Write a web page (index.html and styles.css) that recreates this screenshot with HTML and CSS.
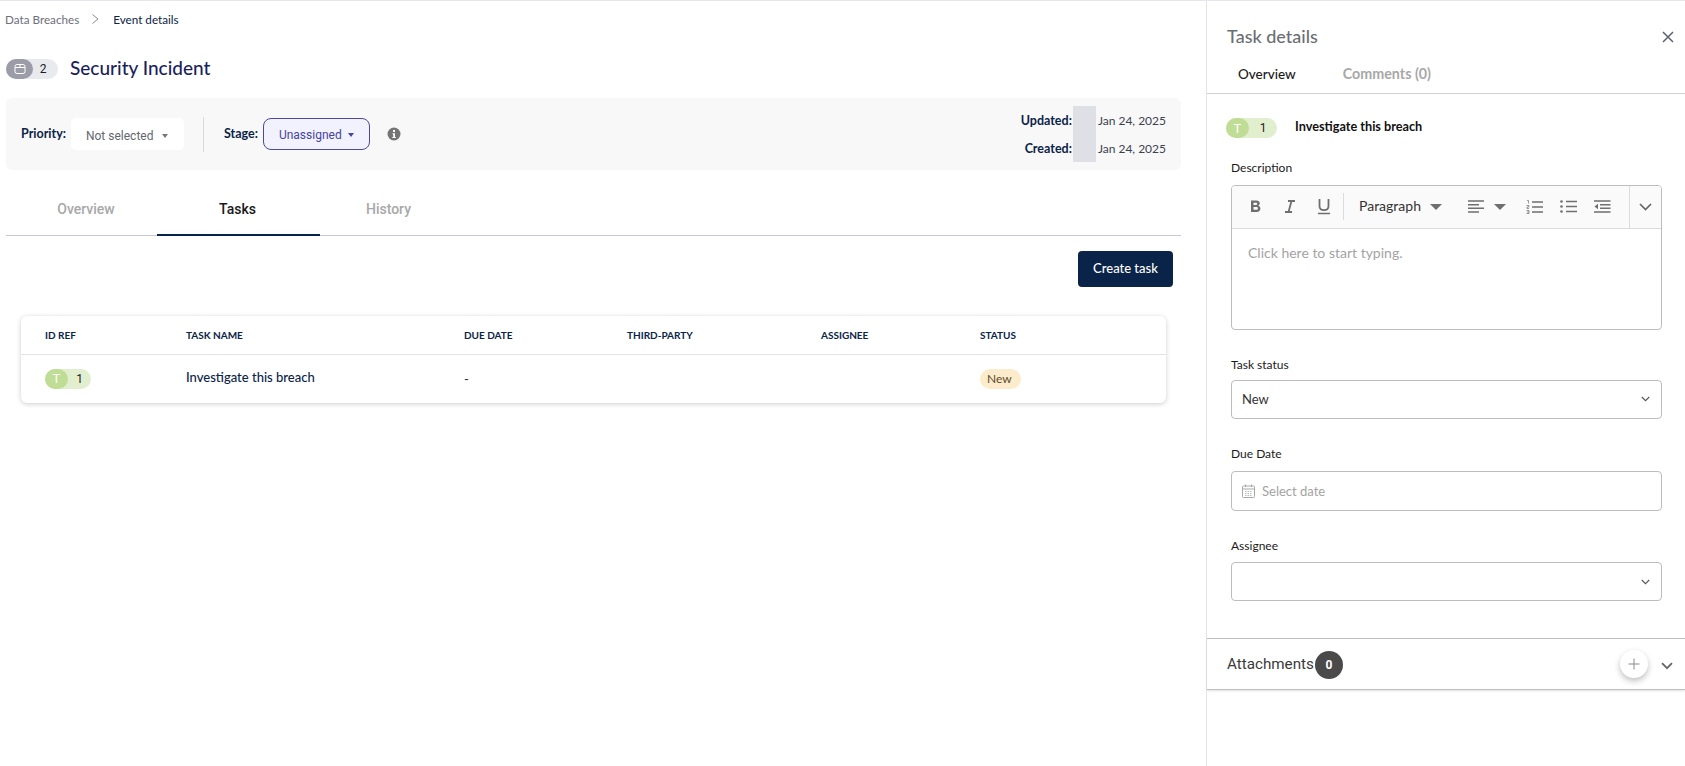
FILE: index.html
```html
<!DOCTYPE html>
<html lang="en">
<head>
<meta charset="utf-8">
<title>Event details</title>
<link rel="stylesheet" href="styles.css">
</head>
<body>
<div class="app">
  <main class="main">
    <nav class="crumbs"><span class="crumb-link">Data Breaches</span>
      <svg class="crumb-sep" width="9" height="12" viewBox="0 0 9 12"><path d="M1.5 1.5 7 6l-5.500 4.500" fill="none" stroke="#8b8b95" stroke-width="1"/></svg>
      <span class="crumb-cur">Event details</span></nav>
    <header class="title-row">
      <span class="chip chip-gray"><span class="chip-lead lead-gray">
        <svg width="12" height="12" viewBox="0 0 12 12"><rect x="1" y="1.500" width="10" height="9" rx="2" fill="none" stroke="#fff" stroke-width="1"/><path d="M1 4.500h10M6 1.500v3" stroke="#fff" stroke-width="1"/></svg>
      </span><span class="chip-num">2</span></span>
      <h1 class="title">Security Incident</h1>
    </header>
    <section class="bar">
      <div class="field-label lbl-priority">Priority:</div>
      <div class="priority">Not selected<span class="caret caret-gray"></span></div>
      <div class="bar-div"></div>
      <div class="field-label">Stage:</div>
      <div class="stage">Unassigned<span class="caret caret-purple"></span></div>
      <svg class="info" width="14" height="14" viewBox="0 0 14 14"><circle cx="7" cy="7" r="6.500" fill="#757575"/><rect x="6" y="3" width="2" height="2" fill="#fff"/><path d="M5.500 6.200h2.500v3.700h.8v1H5.300v-1h.9V7.200h-.7z" fill="#fff"/></svg>
      <div class="dates">
        <span class="date-l">Updated:</span><span class="patch"></span><span class="date-v">Jan 24, 2025</span>
        <span class="date-l">Created:</span><span class="date-v">Jan 24, 2025</span>
      </div>
    </section>
    <div class="tabs">
      <div class="tab">Overview</div>
      <div class="tab tab-on">Tasks</div>
      <div class="tab">History</div>
    </div>
    <div class="actions"><button class="btn">Create task</button></div>
    <section class="card">
      <div class="row row-head">
        <div>ID REF</div><div>TASK NAME</div><div>DUE DATE</div><div>THIRD-PARTY</div><div>ASSIGNEE</div><div>STATUS</div>
      </div>
      <div class="row row-body">
        <div><span class="chip chip-green"><span class="chip-lead lead-green">T</span><span class="chip-num">1</span></span></div>
        <div class="task-name">Investigate this breach</div>
        <div class="cell">-</div><div></div><div></div>
        <div><span class="status">New</span></div>
      </div>
    </section>
  </main>
  <aside class="panel">
    <div class="panel-head">
      <h2 class="panel-title">Task details</h2>
      <svg class="close" width="12" height="12" viewBox="0 0 12 12"><path d="M1 1l10 10M11 1 1 11" stroke="#5c5f73" stroke-width="1.500"/></svg>
    </div>
    <div class="panel-tabs"><span class="ptab ptab-on">Overview</span><span class="ptab">Comments (0)</span></div>
    <div class="panel-sub">
      <span class="chip chip-green chip-wide"><span class="chip-lead lead-green">T</span><span class="chip-num">1</span></span>
      <span class="sub-title">Investigate this breach</span>
    </div>
    <div class="form">
      <label class="lbl lbl-desc">Description</label>
      <div class="editor">
        <div class="toolbar">
          <svg class="ti ti-b" width="14" height="15" viewBox="0 0 14 15"><path d="M2 1.500h5.500c2 0 3.300 1.100 3.300 2.800 0 1.200-.7 2-1.700 2.400 1.400.3 2.300 1.300 2.300 2.800 0 2-1.500 3.500-3.700 3.500H2zm2.500 2.200v2.300h2.600c.8 0 1.200-.5 1.200-1.200s-.5-1.100-1.200-1.100zm0 4.400v2.700h3c.9 0 1.400-.6 1.400-1.400s-.6-1.300-1.400-1.300z" fill="#6f6f6f"/></svg>
          <svg class="ti ti-i" width="14" height="15" viewBox="0 0 14 15"><path d="M5 2h7M2 13h7M8.500 2 5.500 13" fill="none" stroke="#6f6f6f" stroke-width="1.800"/></svg>
          <svg class="ti ti-u" width="14" height="17" viewBox="0 0 14 17"><path d="M2.500 1v7c0 2.700 1.800 4.200 4.500 4.200s4.500-1.500 4.500-4.200V1" fill="none" stroke="#6f6f6f" stroke-width="1.800"/><path d="M1 15.500h12" stroke="#6f6f6f" stroke-width="1.500"/></svg>
          <span class="tb-sep"></span>
          <span class="tb-para">Paragraph</span><span class="tb-caret"></span>
          <svg class="ti ti-al" width="17" height="13" viewBox="0 0 17 13"><path d="M0 1h16M0 4.700h11M0 8.300h16M0 12h11" stroke="#6f6f6f" stroke-width="1.500"/></svg><span class="tb-caret tb-caret2"></span>
          <svg class="ti ti-ol" width="17" height="14" viewBox="0 0 17 14"><path d="M6 2h11M6 7h11M6 12h11" stroke="#6f6f6f" stroke-width="1.500"/><path d="M1 .5h1.500v3M.5 5.500h2.500v1.500H1v1.500h2M.5 10.500H3v3H.5M1 12h2" fill="none" stroke="#6f6f6f" stroke-width=".7"/></svg>
          <svg class="ti ti-ul" width="17" height="13" viewBox="0 0 17 13"><path d="M6 1.500h11M6 6.500h11M6 11.500h11" stroke="#6f6f6f" stroke-width="1.500"/><circle cx="1.500" cy="1.500" r="1.300" fill="#6f6f6f"/><circle cx="1.500" cy="6.500" r="1.300" fill="#6f6f6f"/><circle cx="1.500" cy="11.500" r="1.300" fill="#6f6f6f"/></svg>
          <svg class="ti ti-in" width="17" height="13" viewBox="0 0 17 13"><path d="M0 1h16.500M6 4.700h10.500M6 8.300h10.500M0 12h16.500" stroke="#6f6f6f" stroke-width="1.500"/><path d="M4 3.700v5.600L.5 6.500z" fill="#6f6f6f"/></svg>
          <span class="tb-more">
            <svg width="13" height="8" viewBox="0 0 13 8"><path d="M1 1l5.500 5.500L12 1" fill="none" stroke="#666" stroke-width="1.700"/></svg>
          </span>
        </div>
        <div class="editor-body">Click here to start typing.</div>
      </div>
      <label class="lbl lbl-status">Task status</label>
      <div class="input input-sel input-a"><span>New</span><svg width="9" height="6" viewBox="0 0 9 6"><path d="M.8 1l3.700 3.700L8.200 1" fill="none" stroke="#555" stroke-width="1.100"/></svg></div>
      <label class="lbl lbl-due">Due Date</label>
      <div class="input input-date">
        <svg width="13" height="14" viewBox="0 0 13 14"><rect x=".5" y="2" width="12" height="11.500" rx="1" fill="none" stroke="#a8a8a8"/><path d="M.5 5h12M3.500.5v2.500M9.500.5v2.500" stroke="#a8a8a8"/><path d="M3 7.500h7M3 9.500h7M3 11.500h7" stroke="#b8b8b8" stroke-dasharray="1.500 1"/></svg>
        <span class="placeholder">Select date</span>
      </div>
      <label class="lbl lbl-assign">Assignee</label>
      <div class="input input-sel input-c"><span></span><svg width="9" height="6" viewBox="0 0 9 6"><path d="M.8 1l3.700 3.700L8.200 1" fill="none" stroke="#555" stroke-width="1.100"/></svg></div>
    </div>
    <div class="attach">
      <span class="attach-title">Attachments</span>
      <span class="attach-count">0</span>
      <span class="attach-add"><svg width="12" height="12" viewBox="0 0 12 12"><path d="M6 .5v11M.5 6h11" stroke="#8a8a8a" stroke-width="1"/></svg></span>
      <svg class="attach-chev" width="12" height="8" viewBox="0 0 12 8"><path d="M1 1.200l5 5 5-5" fill="none" stroke="#666" stroke-width="1.800"/></svg>
    </div>
  </aside>
</div>
</body>
</html>
```
FILE: styles.css
```css
* { box-sizing: border-box; }
html, body { margin: 0; padding: 0; height: 100%; background: #fff; overflow: hidden; }
body { font-family: "Lato", "Liberation Sans", sans-serif; color: #0a2348; }
.app { display: flex; height: 766px; border-top: 1px solid #e6e6ee; }
.main { width: 1206px; flex: none; padding: 0 25px 0 6px; }

.crumbs { display: flex; align-items: center; height: 16px; margin-top: 10px; margin-left: -1px; font-size: 11.700px; }
.crumb-link { color: #6e6e7c; }
.crumb-sep { margin: 0 13px 0 12px; }
.crumb-cur { color: #0a2348; }

.title-row { display: flex; align-items: center; margin-top: 27px; height: 30px; }
.chip { display: inline-flex; align-items: center; height: 20px; border-radius: 10px; font-family: "Roboto", sans-serif; font-size: 12px; color: #1c1c1c; }
.chip-gray { width: 52px; background: #e9eaee; }
.chip-gray .chip-num { padding-right: 5px; }
.chip-green { width: 46px; background: #e1efcf; }
.chip-wide { width: 51px; }
.chip-lead { display: flex; align-items: center; justify-content: center; height: 20px; border-radius: 10px; color: #fff; }
.lead-gray { width: 27px; background: #9c9ca8; }
.lead-green { width: 23px; background: #bfdd94; font-size: 13px; }
.chip-num { flex: 1; text-align: center; }
.title { margin: -3px 0 0 12px; font-size: 19px; font-weight: 500; color: #1b1f5e; line-height: 30px; }

.bar { display: flex; align-items: center; height: 72px; margin-top: 14px; padding: 0 15px; background: #f8f8f8; border-radius: 6px; }
.field-label { font-size: 12.500px; font-weight: 700; color: #0a2348; margin-top: -1px; }
.priority { display: flex; align-items: center; width: 113px; height: 32px; margin-left: 5px; padding: 3px 0 0 15px; background: #fff; border-radius: 5px; font-family: "Roboto", sans-serif; font-size: 12px; color: #62666f; }
.caret { width: 0; height: 0; border-left: 3.500px solid transparent; border-right: 3.500px solid transparent; border-top: 4px solid #777; margin-left: 9px; }
.caret-purple { border-top-color: #46459a; margin-left: 6px; }
.bar-div { width: 1px; height: 35px; margin: 0 20px 0 19px; background: #d9d9d9; }
.stage { display: flex; align-items: center; width: 107px; height: 32px; margin-left: 5px; padding: 1px 0 0 15px; background: #f2f1fe; border: 1px solid #4a499c; border-radius: 8px; font-family: "Roboto", sans-serif; font-size: 12px; color: #46459a; }
.info { margin-left: 17px; }
.dates { display: grid; grid-template-columns: auto 24px auto; grid-template-rows: 28px 28px; align-items: center; margin-left: auto; font-size: 12.500px; }
.date-l { font-weight: 700; text-align: right; color: #0a2348; }
.patch { grid-column: 2; grid-row: 1 / span 2; align-self: stretch; background: #dee0e5; margin-left: 1px; }
.date-v { padding-left: 2px; color: #3c4250; font-size: 12px; }

.tabs { display: flex; height: 66px; border-bottom: 1px solid #c9c7d9; }
.tab { display: flex; align-items: center; justify-content: center; width: 163px; padding-top: 13px; padding-right: 2px; font-family: "Roboto", sans-serif; font-size: 14px; font-weight: 500; color: #a8a8a8; margin-bottom: -1px; border-bottom: 2px solid transparent; }
.tab:first-child { width: 151px; padding-left: 9px; padding-right: 0; }
.tab:nth-child(3) { width: 136px; padding-left: 1px; padding-right: 0; }
.tab-on { color: #1a1a1a; border-bottom-color: #0a2348; }

.actions { display: flex; justify-content: flex-end; padding: 15px 8px 0 0; }
.btn { width: 95px; height: 36px; padding: 0 0 2px; border: 0; border-radius: 4px; background: #0a2348; color: #fff; font-family: "Lato", sans-serif; font-size: 13px; font-weight: 500; }

.card { margin: 29px 15px 0; height: 87px; border-radius: 6px; background: #fff; box-shadow: 0 1px 5px rgba(0,0,0,.2); }
.row { display: grid; grid-template-columns: 141px 278px 163px 194px 159px 1fr; padding-left: 24px; align-items: center; }
.row-head { height: 39px; border-bottom: 1px solid #e3e3e3; font-size: 10px; font-weight: 700; color: #0a2348; }
.row-body { height: 47px; font-size: 13px; }
.task-name { font-weight: 500; color: #0a2348; font-size: 13px; margin-top: -3px; }
.cell { color: #333; }
.status { display: inline-block; height: 20px; padding: 0 9px 0 7px; line-height: 20px; border-radius: 10px; background: #fdeccb; color: #5a4a2a; font-size: 12px; }

.panel { flex: 1; border-left: 1px solid #e3e3e3; display: flex; flex-direction: column; }
.panel-head { display: flex; align-items: center; justify-content: space-between; padding: 23px 11px 0 20px; height: 47px; }
.panel-title { margin: 0; font-size: 18px; font-weight: 500; color: #6b6e72; line-height: 24px; }
.close { margin-top: 2px; }
.panel-tabs { display: flex; align-items: center; height: 46px; padding: 6px 0 0 31px; gap: 47px; border-bottom: 1px solid #cfcfd8; font-size: 14.300px; font-weight: 700; color: #a8a8a8; }
.ptab-on { color: #1a1a1a; font-size: 13.500px; font-weight: 500; }
.panel-sub { display: flex; align-items: center; margin-top: 24px; padding-left: 19px; height: 20px; }
.sub-title { margin: -4px 0 0 18px; font-size: 12.700px; font-weight: 700; color: #111; }

.form { padding: 0 23px 0 24px; }
.lbl { display: block; font-size: 12px; font-weight: 400; color: #1a1a1a; line-height: 16px; }
.lbl-desc { margin-top: 22px; }
.lbl-status { margin-top: 27px; }
.lbl-due { margin-top: 27px; }
.lbl-assign { margin-top: 27px; }

.editor { margin-top: 9px; height: 145px; border: 1px solid #bdbdbd; border-radius: 4px; overflow: hidden; }
.toolbar { display: flex; align-items: center; height: 43px; padding-bottom: 1px; background: #fafafa; border-bottom: 1px solid #dcdcdc; }
.ti { flex: none; }
.ti-b { margin-left: 17px; }
.ti-i { margin-left: 20px; }
.ti-u { margin-left: 20px; }
.tb-sep { width: 1px; height: 27px; margin: 0 15px 0 12px; background: #dcdcdc; }
.tb-para { font-size: 14px; color: #333; margin-top: -2px; }
.tb-caret { width: 0; height: 0; margin-left: 9px; border-left: 6px solid transparent; border-right: 6px solid transparent; border-top: 6px solid #6f6f6f; }
.tb-caret2 { margin-left: 9px; }
.ti-al { margin-left: 26px; }
.ti-ol { margin-left: 20px; }
.ti-ul { margin-left: 17px; }
.ti-in { margin-left: 17px; }
.tb-more { display: flex; align-items: center; justify-content: center; align-self: stretch; width: 32px; margin: 0 0 -1px auto; border-left: 1px solid #dcdcdc; }
.editor-body { padding: 15px 16px; font-size: 14px; color: #a3a3a3; }

.input { display: flex; align-items: center; height: 39px; border: 1px solid #bdbdbd; border-radius: 4px; padding: 0 10px; font-size: 13px; color: #333; background: #fff; }
.input-a { margin-top: 7px; padding-bottom: 2px; }
.input-c { margin-top: 8px; }
.input-sel { justify-content: space-between; padding-right: 11px; }
.input-date { height: 40px; margin-top: 9px; padding-left: 10px; gap: 7px; }
.placeholder { color: #a3a3a3; font-size: 13px; }

.attach { display: flex; align-items: center; margin-top: 37px; height: 52px; padding: 0 12px 0 20px; border-top: 1px solid #bfbfbf; border-bottom: 1px solid #bfbfbf; box-shadow: 0 1px 2px rgba(0,0,0,.12); font-family: "Roboto", sans-serif; }
.attach-title { font-size: 15.200px; color: #3a3a3a; margin-top: -1px; }
.attach-count { display: flex; align-items: center; justify-content: center; width: 28px; height: 28px; margin: 2px 0 0 1px; border-radius: 50%; background: #4a4a4a; color: #fff; font-size: 12px; font-weight: 700; }
.attach-add { display: flex; align-items: center; justify-content: center; width: 28px; height: 28px; margin-left: auto; border-radius: 50%; background: #fff; box-shadow: 0 3px 6px rgba(0,0,0,.25); }
.attach-chev { margin: 3px 0 0 13px; }
```
